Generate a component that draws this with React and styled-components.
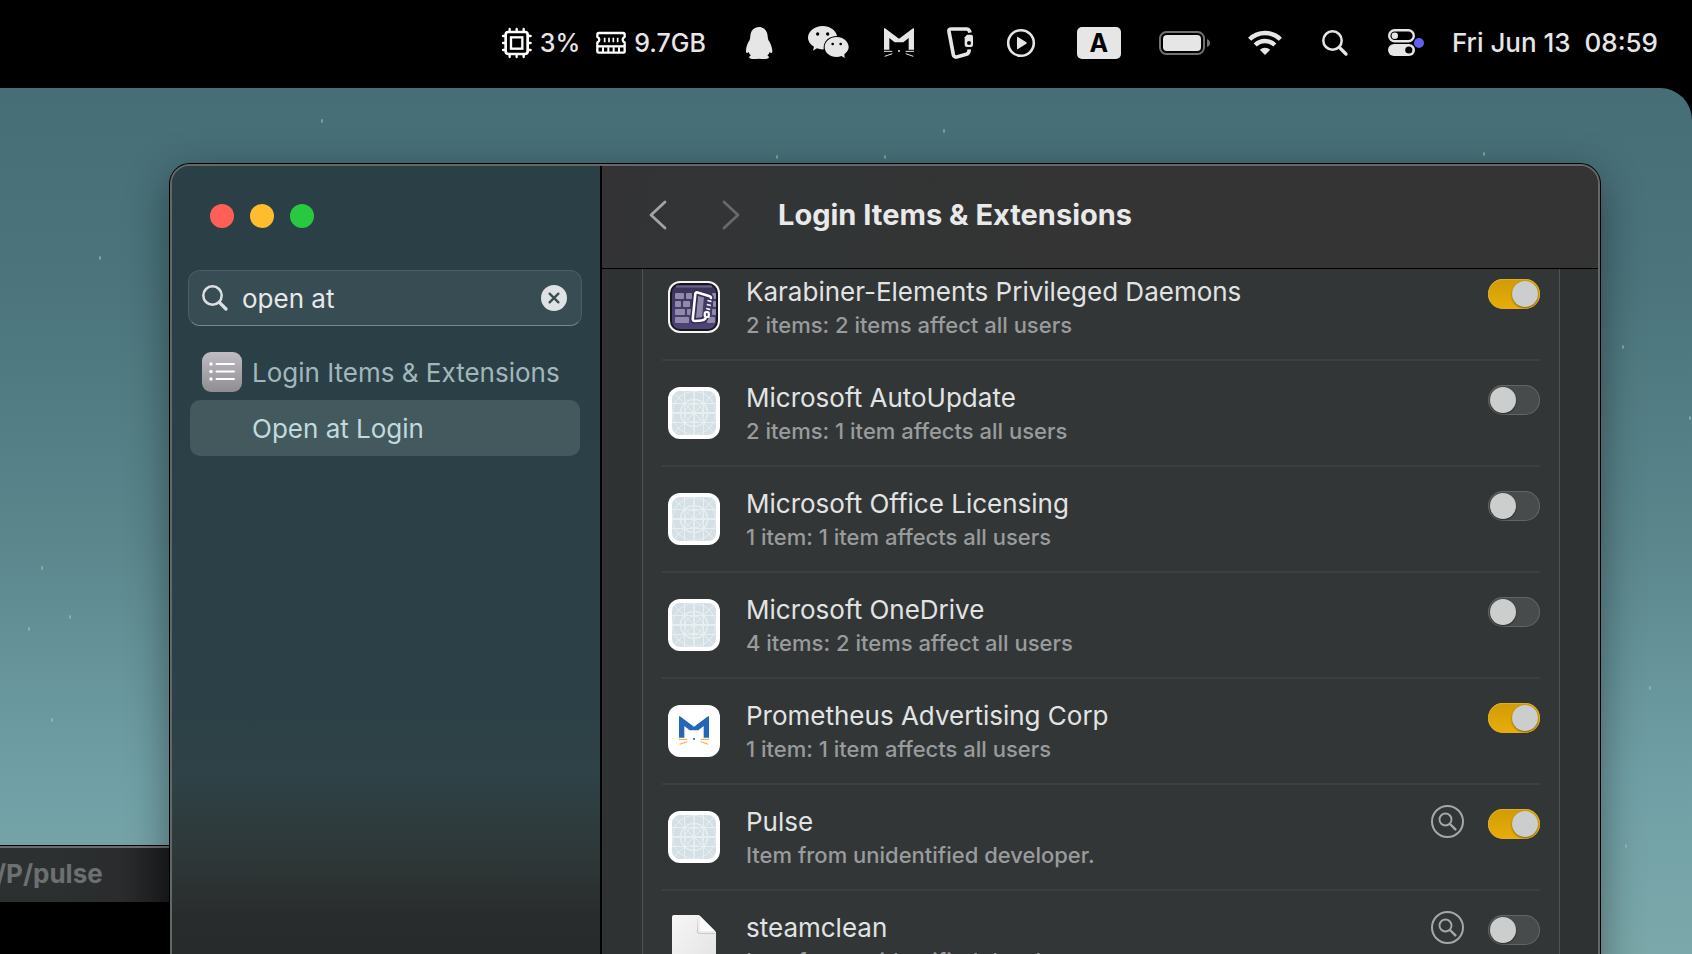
import React, { useState } from "react";
import styled, { createGlobalStyle } from "styled-components";

const GlobalStyle = createGlobalStyle`
  *, *::before, *::after { box-sizing: border-box; }
  html, body, #root { height: 100%; margin: 0; }
  body {
    background: #000;
    overflow: hidden;
    font-family: Inter, "Liberation Sans", sans-serif;
    font-size: 26px;
    line-height: 32px;
    color: #e2e3e3;
  }
  button { border: 0; padding: 0; margin: 0; background: none; color: inherit; font: inherit; }
  svg { display: block; flex: none; overflow: visible; }
`;

const Screen = styled.div`
  display: flex;
  flex-direction: column;
  height: 100vh;
`;

/* ---------- Menu bar ---------- */

const MenuBar = styled.header`
  flex: none;
  display: flex;
  align-items: center;
  justify-content: flex-end;
  height: 88px;
  padding: 0 34px 3px 0;
  background: #000;
  color: #e6e6e6;
`;

const Stats = styled.button`
  display: flex;
  align-items: center;
  gap: 8px;
  padding-right: 18px;
  font-size: 25px;
  font-weight: 500;
`;

const StatValue = styled.span`
  padding-right: ${(p) => (p.$last ? 0 : 8)}px;
`;

const MenuItem = styled.button`
  display: flex;
  align-items: center;
  justify-content: center;
  width: ${(p) => p.$w}px;
  height: 48px;
`;

const InputSource = styled.span`
  width: 44px;
  height: 32px;
  border-radius: 5px;
  background: #e6e6e6;
  color: #000;
  font-size: 25px;
  font-weight: 700;
  text-align: center;
`;

const Clock = styled.button`
  padding-left: 8px;
  font-weight: 500;
  white-space: pre;
`;

const CpuIcon = () => (
  <svg width="30" height="30" viewBox="35 48 90 90" fill="none" stroke="#fff">
    <rect x="46" y="60" width="66" height="66" rx="8" strokeWidth="8" />
    <rect x="62" y="76" width="34" height="34" strokeWidth="7" />
    <path strokeWidth="7" strokeLinecap="round" d="M58 51v8M79 51v8M100 51v8M58 127v8M79 127v8M100 127v8M38 72h8M38 93h8M38 114h8M113 72h8M113 93h8M113 114h8" />
  </svg>
);

const RamIcon = () => (
  <svg width="30" height="22" viewBox="315 60 90 66" fill="none" stroke="#fff" strokeWidth="7">
    <path strokeLinejoin="round" d="M324 63H396Q401 63 401 68V75Q395 78 395 83Q395 88 401 91V118Q401 122 397 122H323Q319 122 319 118V91Q325 88 325 83Q325 78 319 75V68Q319 63 324 63Z" />
    <path d="M319 103H401" />
    <path strokeWidth="5" d="M341 77v14M354 77v14M367 77v14M380 77v14" />
    <path strokeWidth="6" d="M336 106v15M352 106v15M368 106v15M384 106v15" />
  </svg>
);

const PenguinIcon = () => (
  <svg width="28" height="32" viewBox="762 51 84 96" fill="#e6e6e6">
    <path d="M804 51C819 51 829 62 830 78C830 82 831 86 832 90C838 99 843 110 844 122C844 129 841 132 836 126C835 130 832 134 829 136C834 139 835 142 832 145C829 148 814 147 804 146C794 147 779 148 776 145C773 142 775 139 780 136C777 134 774 130 773 126C768 132 764 129 765 122C765 110 770 99 776 90C777 86 778 82 778 78C779 62 789 51 804 51Z" />
  </svg>
);

const ChatIcon = () => (
  <svg width="41" height="33" viewBox="953 51 123 99">
    <path fill="#e6e6e6" d="M997 51C1019 51 1038 65 1040 81C1016 81 998 96 1000 121Q990 122 980 118L968 125L971 113Q953 102 953 87C953 67 973 51 997 51Z" />
    <path fill="#e6e6e6" d="M1039 84C1059 84 1075 98 1075 114Q1075 126 1062 136L1063 147L1053 141Q1046 144 1039 144C1018 144 1003 131 1003 114C1003 98 1019 84 1039 84Z" />
    <g fill="#000">
      <circle cx="982" cy="75" r="5" /><circle cx="1012" cy="75" r="5" />
      <circle cx="1027" cy="105" r="4" /><circle cx="1051" cy="105" r="4" />
    </g>
  </svg>
);

const MaoIcon = ({ size = 30, body = "#e6e6e6", whisker = "#e6e6e6", nose = "#e6e6e6" }) => (
  <svg width={size} height={size} viewBox="9 54 90 90">
    <path fill={body} d="M9 55Q12 54 15 57L54 86L93 57Q96 54 99 55V119H83V84L67 97H41L25 84V119H9Z" />
    <path stroke={whisker} strokeWidth="3" fill="none" d="M9 124H34M11 139L34 131M99 124H74M97 139L74 131" />
    <circle fill={nose} cx="54" cy="123" r="3" />
  </svg>
);

const CarabinerIcon = () => (
  <svg width="26" height="32" viewBox="198 51 78 96">
    <path fill="none" stroke="#e6e6e6" strokeWidth="11" strokeLinejoin="round" strokeLinecap="butt" d="M267 68Q265 57 256 57H211Q202 57 204 65L217 134Q219 142 227 141L256 133Q264 130 265 118" />
    <path fill="#e6e6e6" d="M258 74H270Q276 74 276 80V105Q276 111 270 111H258Q251 111 251 105V82Z" />
    <circle cx="264" cy="99" r="6" fill="#000" />
  </svg>
);

const PlayIcon = () => (
  <svg width="28" height="28" viewBox="0 0 28 28">
    <circle cx="14" cy="14" r="12.8" fill="none" stroke="#e6e6e6" strokeWidth="2.6" />
    <path fill="#e6e6e6" d="M10 8.6Q10 7.4 11 8L19.3 13.3Q20.2 14 19.3 14.7L11 20Q10 20.6 10 19.4Z" />
  </svg>
);

const BatteryIcon = () => (
  <svg width="51" height="24" viewBox="0 0 51 24">
    <rect x="1" y="1" width="44" height="22" rx="6.5" fill="none" stroke="#727272" strokeWidth="2" />
    <rect x="4" y="4" width="38" height="16" rx="4" fill="#e6e6e6" />
    <path d="M48 8Q51 9 51 12Q51 15 48 16Z" fill="#727272" />
  </svg>
);

const WifiIcon = () => (
  <svg width="34" height="25" viewBox="0 0 34 25">
    <g fill="none" stroke="#e6e6e6" strokeWidth="4.4">
      <path d="M1.6 9.3A22 22 0 0 1 32.4 9.3" />
      <path d="M7.2 15A14 14 0 0 1 26.8 15" />
    </g>
    <path fill="#e6e6e6" d="M17 25L11.8 19.8A7.4 7.4 0 0 1 22.2 19.8Z" />
  </svg>
);

const SearchIcon = ({ color = "#e6e6e6", size = 26, stroke = 2.5 }) => (
  <svg width={size} height={size} viewBox="0 0 26 26" fill="none" stroke={color} strokeLinecap="round">
    <circle cx="10.5" cy="10.5" r="9.2" strokeWidth={stroke} />
    <path d="M17.6 17.6L24 24" strokeWidth={stroke + 0.8} />
  </svg>
);

const ControlCenterIcon = () => (
  <svg width="36" height="27" viewBox="0 0 36 27">
    <rect x="1.2" y="1.2" width="24.6" height="11" rx="5.5" fill="none" stroke="#e6e6e6" strokeWidth="2.4" />
    <circle cx="6.8" cy="6.7" r="3.2" fill="#e6e6e6" />
    <rect x="0" y="15" width="27" height="12" rx="6" fill="#e6e6e6" />
    <circle cx="20.8" cy="21" r="3.6" fill="#000" />
    <circle cx="31" cy="14" r="5" fill="#645eef" />
  </svg>
);

/* ---------- Desktop ---------- */

const Desktop = styled.main`
  position: relative;
  flex: 1;
  overflow: hidden;
  border-top-right-radius: 32px;
  background: linear-gradient(180deg, #466e77 0%, #4b747c 22%, #5a868c 52%, #70a0a6 80%, #7ba8aa 100%);
`;

const Specks = styled.svg`
  position: absolute;
  inset: 0;
`;

const speckPoints = [
  [322, 33], [885, 69], [777, 69], [944, 43], [1484, 66], [29, 541], [70, 529],
  [42, 480], [52, 632], [1623, 259], [1690, 330], [1626, 758], [100, 170], [1650, 600],
];

const TerminalWindow = styled.section`
  position: absolute;
  top: 758px;
  left: -400px;
  width: 700px;
  bottom: 0;
  background: #000;
  border-top: 2px solid #6c6e6e;
  box-shadow: 0 0 0 1px #000;
`;

const TerminalBar = styled.div`
  height: 54px;
  padding: 10px 0 0 396px;
  background: linear-gradient(90deg, #2d3031 65%, #292b2c 75%, #1c1d1e 81%);
  color: #6d7071;
  font-weight: 700;
`;

const SettingsWindow = styled.section`
  position: absolute;
  top: 76px;
  left: 170px;
  right: 92px;
  bottom: -40px;
  display: flex;
  overflow: hidden;
  border: 2px solid #636767;
  border-radius: 20px;
  box-shadow: 0 0 0 1px #000, 0 12px 44px rgba(0, 0, 0, 0.42);
  background: #2f3233;
`;

/* ---------- Sidebar ---------- */

const Sidebar = styled.aside`
  flex: none;
  width: 430px;
  padding: 38px 18px 0 16px;
  border-right: 2px solid #000;
  background: linear-gradient(180deg, #2b4046 0, #2c4147 540px, #2e4247 610px, #2e3838 690px, #292c2d 750px, #272929 830px);
`;

const TrafficLights = styled.div`
  display: flex;
  gap: 16px;
  padding-left: 22px;
`;

const Light = styled.button`
  width: 24px;
  height: 24px;
  border-radius: 50%;
  background: ${(p) => p.$color};
`;

const SearchField = styled.label`
  display: flex;
  align-items: center;
  height: 56px;
  margin-top: 42px;
  padding: 0 14px 0 13px;
  border: 1px solid #4a5f64;
  border-bottom-color: #77878b;
  border-radius: 12px;
  background: #384d53;
`;

const SearchInput = styled.input`
  flex: 1;
  min-width: 0;
  padding: 2px 0 0 14px;
  border: 0;
  outline: 0;
  background: none;
  color: #e6e8e9;
  font: inherit;
`;

const ResultList = styled.nav`
  display: flex;
  flex-direction: column;
  margin: 18px 2px 0;
`;

const ResultLink = styled.a`
  display: flex;
  align-items: center;
  gap: 10px;
  height: 56px;
  padding-left: ${(p) => (p.$child ? 62 : 12)}px;
  border-radius: 10px;
  background: ${(p) => (p.$child ? "#43595e" : "transparent")};
  color: ${(p) => (p.$child ? "#c0dadf" : "#a2b7bb")};
  text-decoration: none;
  white-space: nowrap;
`;

const ResultText = styled.span`
  padding-top: 2px;
`;

const ClearIcon = () => (
  <svg width="26" height="26" viewBox="0 0 26 26">
    <circle cx="13" cy="13" r="13" fill="#dfe2e4" />
    <path d="M8.6 8.6L17.4 17.4M17.4 8.6L8.6 17.4" stroke="#384d53" strokeWidth="2.3" strokeLinecap="round" />
  </svg>
);

const ListAppIcon = () => (
  <svg width="40" height="40" viewBox="0 0 40 40">
    <defs>
      <linearGradient id="listFill" x1="0" y1="0" x2="0" y2="1">
        <stop offset="0" stopColor="#bfbdc3" />
        <stop offset="1" stopColor="#8f8d92" />
      </linearGradient>
    </defs>
    <rect width="40" height="40" rx="9" fill="url(#listFill)" />
    <g stroke="#fff" strokeWidth="2" strokeLinecap="round"><path d="M14.5 12H32M14.5 19.5H32M14.5 27H32" /></g>
    <g fill="#fff"><circle cx="9" cy="12" r="1.7" /><circle cx="9" cy="19.5" r="1.7" /><circle cx="9" cy="27" r="1.7" /></g>
  </svg>
);

/* ---------- Content pane ---------- */

const Pane = styled.div`
  flex: 1;
  min-width: 0;
  display: flex;
  flex-direction: column;
`;

const TitleBar = styled.div`
  flex: none;
  display: flex;
  align-items: center;
  height: 103px;
  padding: 0 0 4px 46px;
  border-bottom: 1px solid #000;
  background: linear-gradient(100deg, #333335 0%, #323536 20%, #333433 45%, #333433 100%);
`;

const Nav = styled.div`
  display: flex;
  gap: 55px;
  padding-left: 1px;
`;

const NavButton = styled.button`
  width: 18px;
  height: 30px;
`;

const PaneTitle = styled.h1`
  margin: 0 0 0 38px;
  color: #e9e9e9;
  font-size: 29px;
  font-weight: 700;
`;

const Scroller = styled.div`
  flex: 1;
  min-height: 0;
  overflow: hidden;
  padding: 0 38px 0 40px;
`;

const Card = styled.ul`
  margin: -14px 0 0;
  padding: 0 19px;
  list-style: none;
  border: 1px solid #505353;
  border-top: 0;
  background: #323637;
`;

const Row = styled.li`
  display: flex;
  align-items: flex-start;
  height: 106px;
  padding: 20px 0 0 6px;
  border-bottom: 2px solid #3d3f40;
`;

const IconSlot = styled.div`
  flex: none;
  width: 52px;
  margin: 6px 26px 0 0;
`;

const Labels = styled.label`
  flex: 1;
  display: flex;
  flex-direction: column;
  gap: 1px;
  padding-top: 1px;
`;

const ItemDetail = styled.span`
  color: #999b9c;
  font-size: 22px;
  font-weight: 500;
`;

const RevealButton = styled.button`
  margin-right: 24px;
`;

const Toggle = styled.input`
  appearance: none;
  flex: none;
  width: 52px;
  height: 30px;
  margin: 4px 0 0;
  padding: 2px;
  border-radius: 15px;
  background: #474b4c;
  box-shadow: inset 0 0 0 1px #606464;

  &::before {
    content: "";
    display: block;
    width: 26px;
    height: 26px;
    border-radius: 50%;
    background: #cccecd;
    box-shadow: 0 1px 2px rgba(0, 0, 0, 0.45);
  }

  &:checked {
    background: linear-gradient(180deg, #d09c05, #e8ad08);
    box-shadow: inset 0 0 0 1px #e0ad2c;
  }

  &:checked::before { margin-left: 22px; }
`;

const RevealIcon = () => (
  <svg width="33" height="33" viewBox="0 0 33 33" fill="none" stroke="#a6a8a8">
    <circle cx="16.5" cy="16.5" r="15.5" strokeWidth="2" />
    <circle cx="14.5" cy="14.5" r="6" strokeWidth="1.9" />
    <path d="M19 19L24.4 24.4" strokeWidth="2.4" strokeLinecap="round" />
  </svg>
);

const PlaceholderIcon = () => (
  <svg width="52" height="52" viewBox="0 0 52 52">
    <rect width="52" height="52" rx="12" fill="#fff" />
    <rect x="4" y="4" width="44" height="44" rx="8" fill="#d4e0e5" />
    <g fill="none" stroke="#e7eff1" strokeWidth="1">
      <path d="M4 16.5H48M4 35.5H48M16.5 4V48M35.5 4V48M6 6L46 46M46 6L6 46" />
      <path d="M4 26H48M26 4V48" strokeWidth="1.8" />
      <circle cx="26" cy="26" r="21.5" />
      <circle cx="26" cy="26" r="13.5" strokeWidth="1.5" />
      <circle cx="26" cy="26" r="9" />
    </g>
  </svg>
);

const KarabinerAppIcon = () => (
  <svg width="52" height="52" viewBox="0 0 52 52">
    <defs>
      <linearGradient id="kbFill" x1="0" y1="0" x2="0" y2="1">
        <stop offset="0" stopColor="#3a3358" />
        <stop offset="1" stopColor="#4d4478" />
      </linearGradient>
    </defs>
    <rect width="52" height="52" rx="12" fill="#f4f4f4" />
    <rect x="2" y="2" width="48" height="48" rx="10" fill="#17161c" />
    <rect x="4" y="4" width="44" height="44" rx="8" fill="url(#kbFill)" />
    <path d="M8 5.5H44" stroke="#6b6389" strokeWidth="2" />
    <g fill="#9389ab">
      <rect x="7" y="12" width="9" height="6" rx="1" /><rect x="18" y="12" width="6" height="6" rx="1" /><rect x="44" y="12" width="4" height="6" rx="1" />
      <rect x="7" y="20" width="6" height="6" rx="1" /><rect x="15" y="20" width="7" height="6" rx="1" /><rect x="45" y="20" width="3" height="6" rx="1" />
      <rect x="7" y="28" width="10" height="6" rx="1" /><rect x="19" y="28" width="4" height="6" rx="1" /><rect x="44" y="28" width="4" height="6" rx="1" />
      <rect x="7" y="36" width="14" height="6" rx="1" /><rect x="39" y="36" width="8" height="6" rx="1" />
      <path d="M30 15L36 16L34 36L28 37Z" />
    </g>
    <g fill="none" strokeLinejoin="round" strokeLinecap="round">
      <path d="M43 17Q43 15.500 41 15L29.500 11.500Q27.500 11 27.300 13L24.800 37.500Q24.600 40 27 40L33.500 39.500Q36 39.300 37.500 37.500" stroke="#352d58" strokeWidth="5.500" />
      <path d="M43 17Q43 15.500 41 15L29.500 11.500Q27.500 11 27.300 13L24.800 37.500Q24.600 40 27 40L33.500 39.500Q36 39.300 37.500 37.500" stroke="#fff" strokeWidth="2.600" />
    </g>
    <path d="M39.500 19.500L43.500 20.500M38.800 23.500L42.800 24.500M38.200 27.500L42.200 28.500" stroke="#fff" strokeWidth="1.500" />
    <rect x="36.800" y="31" width="4" height="5" rx="1.500" fill="none" stroke="#fff" strokeWidth="2.200" />
  </svg>
);

const MaoAppIcon = styled.div`
  display: flex;
  justify-content: center;
  width: 52px;
  height: 52px;
  padding-top: 11px;
  border-radius: 12px;
  background: #fff;
`;

const DocumentIcon = () => (
  <svg width="52" height="52" viewBox="0 0 52 52">
    <defs>
      <linearGradient id="docFill" x1="0" y1="0" x2="1" y2="1">
        <stop offset="0" stopColor="#f6f6f6" />
        <stop offset="1" stopColor="#e2e2e2" />
      </linearGradient>
    </defs>
    <path fill="url(#docFill)" d="M6 -2H31L48 15V56H4V0Q4 -2 6 -2Z" />
    <path fill="#c9c9c9" d="M30 -1V14Q30 16 33 16H48L46 17H32Q28 17 29 13Z" />
    <path fill="#fbfbfb" d="M32 -1L47 14H34Q32 14 32 12Z" />
  </svg>
);

const icons = {
  karabiner: <KarabinerAppIcon />,
  placeholder: <PlaceholderIcon />,
  mao: <MaoAppIcon><MaoIcon size={30} body="#2467b4" whisker="#f3a52f" nose="#1d4fa0" /></MaoAppIcon>,
  document: <DocumentIcon />,
};

const items = [
  { name: "Karabiner-Elements Privileged Daemons", detail: "2 items: 2 items affect all users", icon: "karabiner", on: true },
  { name: "Microsoft AutoUpdate", detail: "2 items: 1 item affects all users", icon: "placeholder", on: false },
  { name: "Microsoft Office Licensing", detail: "1 item: 1 item affects all users", icon: "placeholder", on: false },
  { name: "Microsoft OneDrive", detail: "4 items: 2 items affect all users", icon: "placeholder", on: false },
  { name: "Prometheus Advertising Corp", detail: "1 item: 1 item affects all users", icon: "mao", on: true },
  { name: "Pulse", detail: "Item from unidentified developer.", icon: "placeholder", on: true, reveal: true },
  { name: "steamclean", detail: "Item from unidentified developer.", icon: "document", on: false, reveal: true },
];

const BackgroundItem = ({ item, id }) => {
  const [on, setOn] = useState(item.on);
  return (
    <Row>
      <IconSlot>{icons[item.icon]}</IconSlot>
      <Labels htmlFor={id}>
        <span>{item.name}</span>
        <ItemDetail>{item.detail}</ItemDetail>
      </Labels>
      {item.reveal && <RevealButton aria-label="Show in Finder"><RevealIcon /></RevealButton>}
      <Toggle id={id} type="checkbox" checked={on} onChange={() => setOn(!on)} />
    </Row>
  );
};

export default function App() {
  const [query, setQuery] = useState("open at");
  return (
    <Screen>
      <GlobalStyle />
      <MenuBar>
        <Stats>
          <CpuIcon /><StatValue>3%</StatValue>
          <RamIcon /><StatValue $last>9.7GB</StatValue>
        </Stats>
        <MenuItem $w={70} aria-label="QQ"><PenguinIcon /></MenuItem>
        <MenuItem $w={70} aria-label="WeChat"><ChatIcon /></MenuItem>
        <MenuItem $w={70} aria-label="Mao"><MaoIcon /></MenuItem>
        <MenuItem $w={52} aria-label="Karabiner"><CarabinerIcon /></MenuItem>
        <MenuItem $w={70} aria-label="Now Playing"><PlayIcon /></MenuItem>
        <MenuItem $w={86}><InputSource>A</InputSource></MenuItem>
        <MenuItem $w={86} aria-label="Battery"><BatteryIcon /></MenuItem>
        <MenuItem $w={74} aria-label="Wi-Fi"><WifiIcon /></MenuItem>
        <MenuItem $w={66} aria-label="Spotlight"><SearchIcon /></MenuItem>
        <MenuItem $w={76} aria-label="Control Center"><ControlCenterIcon /></MenuItem>
        <Clock>{"Fri Jun 13  08:59"}</Clock>
      </MenuBar>

      <Desktop>
        <Specks width="100%" height="100%" aria-hidden="true">
          {speckPoints.map(([x, y]) => (
            <ellipse key={`${x}-${y}`} cx={x} cy={y} rx="1" ry="2" fill="#a9c9cc" opacity="0.6" />
          ))}
        </Specks>

        <TerminalWindow>
          <TerminalBar>/P/pulse</TerminalBar>
        </TerminalWindow>

        <SettingsWindow>
          <Sidebar>
            <TrafficLights>
              <Light $color="#ff5f57" aria-label="Close" />
              <Light $color="#febc2e" aria-label="Minimize" />
              <Light $color="#28c840" aria-label="Zoom" />
            </TrafficLights>
            <SearchField>
              <SearchIcon color="#dde0e2" />
              <SearchInput aria-label="Search" value={query} onChange={(e) => setQuery(e.target.value)} />
              <button aria-label="Clear" onClick={() => setQuery("")}><ClearIcon /></button>
            </SearchField>
            <ResultList>
              <ResultLink href="#extensions"><ListAppIcon /><ResultText>Login Items &amp; Extensions</ResultText></ResultLink>
              <ResultLink href="#open-at-login" $child><ResultText>Open at Login</ResultText></ResultLink>
            </ResultList>
          </Sidebar>

          <Pane>
            <TitleBar>
              <Nav>
                <NavButton aria-label="Back">
                  <svg width="18" height="30" viewBox="0 0 18 30" fill="none" stroke="#a3a4a4" strokeWidth="2.8" strokeLinecap="round" strokeLinejoin="round"><path d="M16 2L2 15L16 28" /></svg>
                </NavButton>
                <NavButton aria-label="Forward">
                  <svg width="18" height="30" viewBox="0 0 18 30" fill="none" stroke="#686969" strokeWidth="2.8" strokeLinecap="round" strokeLinejoin="round"><path d="M2 2L16 15L2 28" /></svg>
                </NavButton>
              </Nav>
              <PaneTitle>Login Items &amp; Extensions</PaneTitle>
            </TitleBar>
            <Scroller>
              <Card>
                {items.map((item, i) => (
                  <BackgroundItem key={item.name} id={`item-${i}`} item={item} />
                ))}
              </Card>
            </Scroller>
          </Pane>
        </SettingsWindow>
      </Desktop>
    </Screen>
  );
}
